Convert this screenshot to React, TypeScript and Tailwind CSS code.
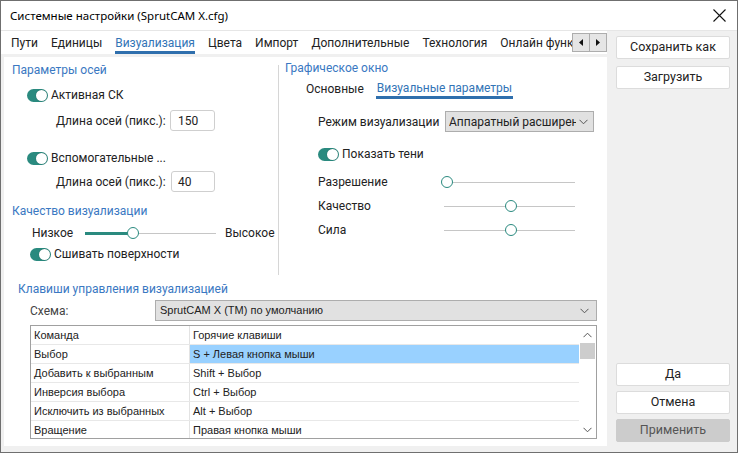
import React from "react";

const TEAL = "bg-[#2a8a7f]";

function Toggle() {
  return (
    <span className={`relative inline-flex h-[13px] w-[21px] shrink-0 items-center rounded-full ${TEAL}`}>
      <span className="absolute right-[1px] h-[11px] w-[11px] rounded-full bg-white shadow-[0_0_1px_rgba(0,0,0,0.4)]" />
    </span>
  );
}

function Slider({ pos, fill = false, width }: { pos: number; fill?: boolean; width: number }) {
  return (
    <div className="relative h-[12px] shrink-0" style={{ width }}>
      <div className="absolute left-0 right-0 top-[6px] h-px bg-[#c6c6c6]" />
      {fill && <div className="absolute left-0 top-[5px] h-[3px] bg-[#2a8a7f]" style={{ width: pos }} />}
      <div
        className="absolute top-[0px] h-[12px] w-[12px] rounded-full border-[1.5px] border-[#2a8a7f] bg-white"
        style={{ left: pos - 6 }}
      />
    </div>
  );
}

function Chevron({ up = false }: { up?: boolean }) {
  return (
    <svg width="9" height="6" viewBox="0 0 9 6" className={up ? "rotate-180" : ""}>
      <path d="M0.5 0.8 L4.5 4.8 L8.5 0.8" fill="none" stroke="#555" strokeWidth="1" />
    </svg>
  );
}

function Tri({ left = false }: { left?: boolean }) {
  return (
    <svg width="4" height="7" viewBox="0 0 4 7">
      <path d={left ? "M4 0 L0 3.5 L4 7 Z" : "M0 0 L4 3.5 L0 7 Z"} fill="#111" />
    </svg>
  );
}

function Btn({ children, disabled = false }: { children: React.ReactNode; disabled?: boolean }) {
  return (
    <div
      className={`flex h-[23px] w-[114px] items-center justify-center rounded-[2px] border text-[12.5px] ${
        disabled ? "border-[#cccccc] bg-[#cccccc] text-[#555]" : "border-[#dcdcdc] bg-white text-[#222]"
      }`}
    >
      {children}
    </div>
  );
}

const tabs = ["Пути", "Единицы", "Визуализация", "Цвета", "Импорт", "Дополнительные", "Технология", "Онлайн функции"];

const rows: [string, string][] = [
  ["Выбор", "S + Левая кнопка мыши"],
  ["Добавить к выбранным", "Shift + Выбор"],
  ["Инверсия выбора", "Ctrl + Выбор"],
  ["Исключить из выбранных", "Alt + Выбор"],
  ["Вращение", "Правая кнопка мыши"],
];

export default function App() {
  return (
    <div
      className="flex h-[453px] w-[738px] flex-col overflow-hidden whitespace-nowrap border border-[#6f6f6f] bg-[#f0f0f0] text-[12px] text-[#222]"
      style={{ fontFamily: "Roboto, 'Liberation Sans', sans-serif" }}
    >
      {/* title bar */}
      <div className="flex h-[29px] shrink-0 items-center justify-between bg-white pl-[9px] pr-[11px]">
        <span className="text-[11.5px] text-black" style={{ fontFamily: "'Noto Sans', sans-serif" }}>
          Системные настройки (SprutCAM X.cfg)
        </span>
        <svg width="13" height="13" viewBox="0 0 13 13">
          <path d="M0.5 0.5 L12.5 12.5 M12.5 0.5 L0.5 12.5" stroke="#111" strokeWidth="1.1" />
        </svg>
      </div>
      <div className="h-px bg-[#e6e6e6]" />

      <div className="flex flex-1">
        {/* left column */}
        <div className="flex w-[606px] flex-col">
          <div className="flex h-[23px] items-center bg-white">
            <div className="flex h-full w-[571px] shrink-0 items-center overflow-hidden pl-[10px]">
              {tabs.map((t) => (
                <span
                  key={t}
                  className={`mr-[13px] flex h-full shrink-0 items-center ${
                    t === "Визуализация" ? "border-b-[3px] border-[#2f6fad] pt-[3px] text-[#3274b6]" : ""
                  }`}
                >
                  {t}
                </span>
              ))}
            </div>
            <div className="flex h-[19px]">
              <span className="flex w-[18px] items-center justify-center border border-[#adadad] bg-[#e5e5e5]">
                <Tri left />
              </span>
              <span className="flex w-[17px] items-center justify-center border border-l-0 border-[#adadad] bg-[#e5e5e5]">
                <Tri />
              </span>
            </div>
          </div>

          <div className="mb-[6px] ml-[3px] mt-[3px] flex flex-1 flex-col bg-white">
            <div className="flex h-[218px]">
              {/* axis + quality */}
              <div className="flex w-[274px] flex-col">
                <div className="mt-[5px] flex h-[16px] items-center pl-[8px] text-[#3a78c2]">Параметры осей</div>
                <div className="mt-[9px] flex h-[16px] items-center gap-[3px] pl-[23px]">
                  <Toggle />
                  Активная СК
                </div>
                <div className="mt-[7px] flex h-[21px] items-center pl-[52px]">
                  <span className="w-[114px]">Длина осей (пикс.):</span>
                  <div className="flex h-[21px] w-[45px] items-center rounded-[3px] border border-[#cfcfcf] pl-[7px]">150</div>
                </div>
                <div className="mt-[19px] flex h-[16px] items-center gap-[3px] pl-[23px]">
                  <Toggle />
                  Вспомогательные ...
                </div>
                <div className="mt-[5px] flex h-[21px] items-center pl-[52px]">
                  <span className="w-[115px]">Длина осей (пикс.):</span>
                  <div className="flex h-[21px] w-[44px] items-center rounded-[3px] border border-[#cfcfcf] pl-[6px]">40</div>
                </div>
                <div className="mt-[11px] flex h-[16px] items-center pl-[8px] text-[#3a78c2]">Качество визуализации</div>
                <div className="mt-[6px] flex h-[16px] items-center pl-[28px]">
                  <span className="w-[53px]">Низкое</span>
                  <Slider pos={48} fill width={131} />
                  <span className="ml-[9px]">Высокое</span>
                </div>
                <div className="mt-[5px] flex h-[16px] items-center gap-[3px] pl-[26px]">
                  <Toggle />
                  Сшивать поверхности
                </div>
              </div>
              <div className="mt-[8px] w-px bg-[#d6d6d6]" />
              {/* graphics window */}
              <div className="flex flex-1 flex-col">
                <div className="mt-[3px] flex h-[16px] items-center pl-[6px] text-[#3a78c2]">Графическое окно</div>
                <div className="mt-[5px] flex h-[18px] pl-[27px]">
                  <span className="leading-[16px]">Основные</span>
                  <span className="ml-[12px] border-b-[3px] border-[#2f6fad] px-[1px] leading-[15px] text-[#3274b6]">
                    Визуальные параметры
                  </span>
                </div>
                <div className="mt-[12px] flex h-[21px] items-center pl-[39px]">
                  <span className="w-[127px] shrink-0">Режим визуализации</span>
                  <div className="flex h-[21px] w-[149px] shrink-0 items-center justify-between border border-[#adadad] bg-[#e1e1e1] pl-[3px] pr-[5px] text-[12px]">
                    <span className="w-[127px] overflow-hidden">Аппаратный расширенный</span>
                    <Chevron />
                  </div>
                </div>
                <div className="mt-[14px] flex h-[16px] items-center gap-[3px] pl-[39px]">
                  <Toggle />
                  Показать тени
                </div>
                {[
                  ["Разрешение", 3, 12],
                  ["Качество", 67, 8],
                  ["Сила", 67, 8],
                ].map(([label, pos, mt]) => (
                  <div
                    key={label as string}
                    className="flex h-[16px] items-center pl-[39px]"
                    style={{ marginTop: mt as number }}
                  >
                    <span className="w-[126px] shrink-0">{label}</span>
                    <Slider pos={pos as number} width={131} />
                  </div>
                ))}
              </div>
            </div>

            {/* hot keys */}
            <div className="mt-[6px] flex h-[16px] items-center pl-[14px] text-[#3a78c2]">Клавиши управления визуализацией</div>
            <div className="mt-[3px] flex h-[21px] items-center pl-[26px]">
              <span className="w-[125px] shrink-0 text-[#444]">Схема:</span>
              <div
                className="flex h-[21px] w-[442px] shrink-0 items-center justify-between border border-[#adadad] bg-[#e1e1e1] pl-[4px] pr-[7px] text-[11px]"
                style={{ fontFamily: "'Liberation Sans', sans-serif" }}
              >
                SprutCAM X (TM) по умолчанию
                <Chevron />
              </div>
            </div>
            <div
              className="ml-[26px] mt-[4px] flex h-[114px] w-[567px] overflow-hidden border border-[#a0a0a0] text-[11px]"
              style={{ fontFamily: "'Liberation Sans', sans-serif" }}
            >
              <div className="flex flex-1 flex-col">
                {[["Команда", "Горячие клавиши"] as [string, string], ...rows].map(([a, b], i) => (
                  <div key={a} className="flex h-[19px] shrink-0 border-b border-[#e8e8e8]">
                    <span className="flex w-[159px] shrink-0 items-center border-r border-[#e3e3e3] pl-[3px]">{a}</span>
                    <span className={`flex flex-1 items-center pl-[3px] ${i === 1 ? "bg-[#99d1ff]" : ""}`}>{b}</span>
                  </div>
                ))}
              </div>
              <div className="flex w-[17px] flex-col items-center bg-white">
                <div className="flex h-[17px] items-center">
                  <Chevron up />
                </div>
                <div className="h-[16px] w-[15px] bg-[#cdcdcd]" />
                <div className="flex-1" />
                <div className="flex h-[17px] items-center">
                  <Chevron />
                </div>
              </div>
            </div>
          </div>
        </div>

        {/* right buttons */}
        <div className="flex flex-1 flex-col justify-between pb-[10px] pl-[9px] pt-[5px]">
          <div className="flex flex-col gap-[7px]">
            <Btn>Сохранить как</Btn>
            <Btn>Загрузить</Btn>
          </div>
          <div className="flex flex-col gap-[5px]">
            <Btn>Да</Btn>
            <Btn>Отмена</Btn>
            <Btn disabled>Применить</Btn>
          </div>
        </div>
      </div>
    </div>
  );
}
